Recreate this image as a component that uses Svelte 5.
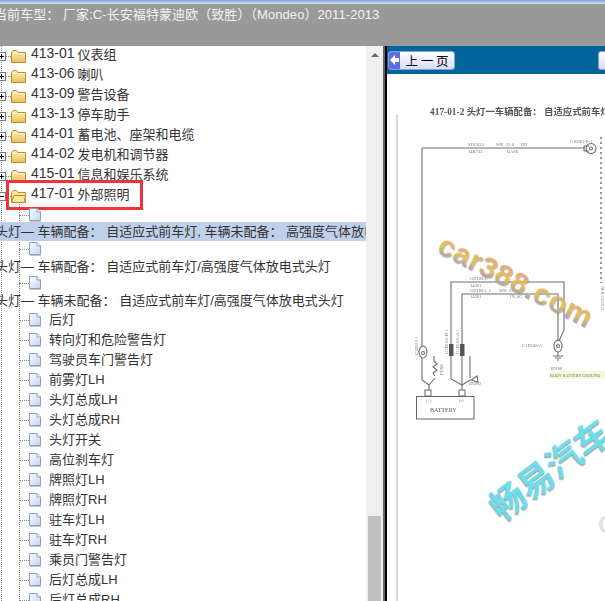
<script lang="ts">
	type Row = { kind: 'folder' | 'doc' | 'wrapped'; label: string; code?: string; open?: boolean; selected?: boolean; last?: boolean };

	const rows: Row[] = [
		{ kind: 'folder', code: '413-01', label: '仪表组' },
		{ kind: 'folder', code: '413-06', label: '喇叭' },
		{ kind: 'folder', code: '413-09', label: '警告设备' },
		{ kind: 'folder', code: '413-13', label: '停车助手' },
		{ kind: 'folder', code: '414-01', label: '蓄电池、座架和电缆' },
		{ kind: 'folder', code: '414-02', label: '发电机和调节器' },
		{ kind: 'folder', code: '415-01', label: '信息和娱乐系统' },
		{ kind: 'folder', code: '417-01', label: '外部照明', open: true },
		{ kind: 'wrapped', label: '头灯— 车辆配备： 自适应式前车灯, 车辆未配备： 高强度气体放电式头灯', selected: true },
		{ kind: 'wrapped', label: '头灯— 车辆配备： 自适应式前车灯/高强度气体放电式头灯' },
		{ kind: 'wrapped', label: '头灯— 车辆未配备： 自适应式前车灯/高强度气体放电式头灯', last: true },
		{ kind: 'doc', label: '后灯' },
		{ kind: 'doc', label: '转向灯和危险警告灯' },
		{ kind: 'doc', label: '驾驶员车门警告灯' },
		{ kind: 'doc', label: '前雾灯LH' },
		{ kind: 'doc', label: '头灯总成LH' },
		{ kind: 'doc', label: '头灯总成RH' },
		{ kind: 'doc', label: '头灯开关' },
		{ kind: 'doc', label: '高位刹车灯' },
		{ kind: 'doc', label: '牌照灯LH' },
		{ kind: 'doc', label: '牌照灯RH' },
		{ kind: 'doc', label: '驻车灯LH' },
		{ kind: 'doc', label: '驻车灯RH' },
		{ kind: 'doc', label: '乘员门警告灯' },
		{ kind: 'doc', label: '后灯总成LH' },
		{ kind: 'doc', label: '后灯总成RH' }
	];
</script>

{#snippet docIcon()}
	<svg class="doc-icon" width="12" height="14" viewBox="0 0 12 14">
		<path d="M.5.5H8L11.5 4V12.5H.5Z" fill="url(#pg)" stroke="#8d9fc4" />
		<path d="M8 .5V4H11.5" fill="#fff" stroke="#8d9fc4" />
		<path d="M1 13.5H12" stroke="#c4c4c4" />
	</svg>
{/snippet}

<svg class="defs" width="0" height="0">
	<defs>
		<linearGradient id="pg" x1="0" y1="0" x2="1" y2="1">
			<stop offset="0" stop-color="#ffffff" />
			<stop offset="1" stop-color="#c0d2f2" />
		</linearGradient>
		<linearGradient id="fg" x1="0" y1="0" x2="0" y2="1">
			<stop offset="0" stop-color="#fdf3b8" />
			<stop offset="1" stop-color="#eebc55" />
		</linearGradient>
	</defs>
</svg>

<div class="screen">
	<div class="chrome"></div>
	<header class="info">
		<span class="info-text">当前车型： 厂家:C-长安福特蒙迪欧（致胜）（Mondeo）2011-2013</span>
	</header>

	<div class="main">
		<aside class="tree">
			<div class="list">
				<div class="spine"></div>
				<div class="spine inner"></div>
				<div class="rows">
					{#each rows as row}
						{#if row.kind === 'folder'}
							<div class="row folder" class:boxed={row.open}>
								<span class="expander" class:plus={!row.open}></span>
								<span class="dots"></span>
								<svg class="folder-icon" width="15" height="13" viewBox="0 0 15 13">
									<path d="M.5 2.5V12.5H14.5V2.5H7L5.5.5H2Z" fill="url(#fg)" stroke="#b98f2e" />
									{#if row.open}
										<path d="M.5 12.5 3 5.5H14.5L13 12.5Z" fill="#fbe994" stroke="#b98f2e" />
									{:else}
										<path d="M1.5 3.5H13.5" stroke="#fff8d0" />
									{/if}
								</svg>
								<span class="code">{row.code}</span>
								<span class="name">{row.label}</span>
							</div>
						{:else if row.kind === 'wrapped'}
							<div class="wrapped" class:last={row.last}>
								<div class="icon-line">
									<span class="dots long"></span>
									{@render docIcon()}
								</div>
								<div class="wrapped-text" class:selected={row.selected}>
									<span>{row.label}</span>
								</div>
							</div>
						{:else}
							<div class="row doc">
								<span class="dots long"></span>
								{@render docIcon()}
								<span class="label">{row.label}</span>
							</div>
						{/if}
					{/each}
				</div>
			</div>
			<div class="scrollbar">
				<span class="arrow"></span>
				<span class="thumb"></span>
			</div>
		</aside>

		<section class="viewer">
			<div class="toolbar">
				<button class="nav">
					<span class="nav-arrow"><svg width="10" height="10" viewBox="0 0 10 10"><path d="M0 5 5 0V3H9V7H5V10Z" fill="#fff" /></svg></span>
					<span class="nav-label">上 一 页</span>
				</button>
				<button class="nav next"></button>
			</div>
			<div class="page">
				<div class="rule"></div>
				<div class="title">417-01-2 头灯一车辆配备： 自适应式前车灯, 车辆未配备： 高强度气体放电式头灯</div>
				<svg class="diagram" width="218" height="486" viewBox="387 115 218 486">
					<g fill="none" stroke="#6f6f6f" stroke-width="1.1">
						<path d="M422 148V346" />
						<path d="M422 148H585" />
						<circle cx="591" cy="148.500" r="5" />
						<circle cx="591" cy="148.500" r="1.500" />
						<path d="M584 146H589M584 151H589M584 146V151" />
						<path d="M601 137V283" stroke-dasharray="2 3" stroke-width="2" stroke="#999" />
						<path d="M451 346V282H564V330L559 341" />
						<path d="M462 346V294H558V341" />
						<ellipse cx="423" cy="352" rx="4" ry="6" />
						<circle cx="423" cy="353" r="1.500" />
						<path d="M422 358V380L429 385" />
						<path d="M434 356v5l3 3-4 3 4 3-4 3 2 3" />
						<path d="M435 378L429 385" />
						<path d="M451 356V379L462 385L470 380" />
						<path d="M462 356V385M470 356V378" />
						<path d="M429 385V390M462 385V390" />
						<path d="M477 376L471 380L478 382Z" />
						<ellipse cx="558" cy="346" rx="4" ry="6" />
						<circle cx="558" cy="346" r="1.500" />
						<path d="M558 352V356M553 356H563M555 358H561M557 360H559" />
					</g>
					<rect x="449" y="344" width="4.500" height="12" fill="#555" />
					<rect x="460" y="344" width="4.500" height="12" fill="#555" />
					<g fill="#fff" stroke="#666">
						<rect x="425" y="390" width="6" height="6" />
						<rect x="459" y="390" width="6" height="6" />
						<rect x="416.500" y="396.500" width="57.500" height="22.500" />
					</g>
					<g class="small" fill="#777">
						<text x="468" y="146">SDC02A</text>
						<text x="496" y="146">WK</text>
						<text x="506" y="146">25.0</text>
						<text x="521" y="146">RD</text>
						<text x="468" y="153">14K733</text>
						<text x="507" y="153">BASE</text>
						<text x="570" y="143">C10001-B-1</text>
						<text x="470" y="280">GD108A</text>
						<text x="470" y="287">14301</text>
						<text x="470" y="292">GD108A_1</text>
						<text x="499" y="292">WK</text>
						<text x="509" y="292">22.0</text>
						<text x="470" y="298">14301</text>
						<text x="510" y="298">IN_0G</text>
						<text x="522" y="347">G1D108-A</text>
						<text x="550" y="370">1D108</text>
						<text x="468" y="385">1D0N2</text>
						<text x="426" y="402">(+)</text>
						<text x="459" y="402">(-)</text>
						<text x="418" y="355" transform="rotate(-90 418 355)">C1D010-1</text>
						<text x="448" y="354" transform="rotate(-90 448 354)">G1D10A-B-1</text>
						<text x="459" y="354" transform="rotate(-90 459 354)">G1D10A-A-1</text>
						<text x="443" y="375" transform="rotate(-90 443 375)">FUSE</text>
						<text x="604" y="310" transform="rotate(-90 604 310)">C10001-S-B1</text>
					</g>
					<rect x="550" y="371" width="55" height="8" fill="#f7f7dc" />
					<text x="550" y="377" class="small ground" fill="#777">BODY BATTERY GROUND</text>
					<text x="430" y="412" class="battery" fill="#666">BATTERY</text>
				</svg>
				<span class="mark mark-car">car388.com</span>
				<span class="mark mark-cn">畅易汽车</span>
				<span class="mark-c">C</span>
			</div>
		</section>
	</div>
</div>

<style>
	:global(body) {
		margin: 0;
		background: #fff;
		overflow: hidden;
	}

	.defs {
		position: absolute;
	}

	.screen {
		width: 605px;
		height: 601px;
		display: flex;
		flex-direction: column;
		overflow: hidden;
		font-family: 'Liberation Sans', 'Noto Sans CJK SC', sans-serif;
	}

	.chrome {
		height: 4px;
		background: linear-gradient(#7f9fd8, #d8e0f4);
	}

	.info {
		height: 42px;
		box-sizing: border-box;
		background: #999;
		color: #f4f4f4;
		font-size: 13px;
		line-height: 20px;
		padding-top: 1px;
		white-space: nowrap;
		overflow: hidden;
	}

	.info-text {
		display: block;
		margin-left: -6px;
		letter-spacing: 0.07px;
	}

	.main {
		flex: 1;
		display: flex;
		min-height: 0;
	}

	.tree {
		width: 385px;
		display: flex;
		flex: none;
		overflow: hidden;
	}

	.list {
		width: 366px;
		flex: none;
		position: relative;
		overflow: hidden;
		font-size: 13px;
		color: #333;
	}

	.rows {
		margin-top: -3px;
	}

	.spine {
		position: absolute;
		left: 1px;
		top: 0;
		bottom: 0;
		border-left: 1px dotted #888;
	}

	.spine.inner {
		left: 19px;
		top: 158px;
	}

	.row {
		height: 20px;
		display: flex;
		align-items: center;
		white-space: nowrap;
		position: relative;
	}

	.row.doc {
		padding-left: 19px;
	}

	.doc .dots,
	.doc .doc-icon {
		margin-top: 4px;
	}

	.doc .label {
		margin-left: 8px;
	}

	.folder .expander,
	.folder .dots,
	.folder .folder-icon {
		margin-top: 6px;
	}

	.folder-icon {
		flex: none;
	}

	.code {
		margin-left: 5px;
		font-size: 14px;
	}

	.name {
		margin-left: 3px;
	}

	.boxed::after {
		content: '';
		position: absolute;
		left: 6px;
		top: -3px;
		width: 137px;
		height: 30px;
		box-sizing: border-box;
		border: 3px solid #f0343a;
	}

	.expander {
		position: relative;
		width: 7px;
		height: 9px;
		margin-left: -1px;
		box-sizing: border-box;
		border: 1px solid #777;
		border-left: none;
		background: linear-gradient(#000, #000) 0 3px / 5px 1px no-repeat #fff;
		flex: none;
	}

	.expander.plus::after {
		content: '';
		position: absolute;
		left: 2px;
		top: 1px;
		width: 1px;
		height: 5px;
		background: #000;
	}

	.dots {
		width: 5px;
		border-top: 1px dotted #888;
		flex: none;
	}

	.dots.long {
		width: 10px;
	}

	.wrapped {
		height: 34px;
		position: relative;
	}

	.wrapped.last {
		height: 37px;
	}

	.icon-line {
		height: 24px;
		padding-left: 19px;
		display: flex;
		align-items: center;
	}

	.doc-icon {
		flex: none;
	}

	.wrapped-text {
		position: relative;
		height: 20px;
		line-height: 20px;
		margin-top: -4px;
		white-space: nowrap;
		overflow: hidden;
	}

	.wrapped-text span {
		display: block;
		margin-left: -5px;
	}

	.wrapped-text.selected {
		height: 19px;
		margin-top: -5px;
		background: #c0d0ea;
	}

	.scrollbar {
		width: 17px;
		background: #f0f0f0;
		border-right: 2px solid #666;
		position: relative;
		flex: none;
	}

	.arrow {
		position: absolute;
		left: 5px;
		top: 7px;
		border: 4px solid transparent;
		border-top: none;
		border-bottom: 4px solid #666;
	}

	.thumb {
		position: absolute;
		left: 2px;
		right: 2px;
		top: 470px;
		bottom: 0;
		background: #c0c0c0;
	}

	.viewer {
		flex: 1;
		min-width: 0;
		display: flex;
		flex-direction: column;
		border-left: 2px solid #000;
		background: #fff;
	}

	.toolbar {
		height: 28px;
		flex: none;
		background: #006699;
		display: flex;
		align-items: center;
		justify-content: space-between;
		padding: 0 0 0 1px;
		box-sizing: border-box;
	}

	.nav {
		width: 67px;
		height: 19px;
		padding: 0;
		display: flex;
		align-items: stretch;
		border: 1px solid #8f9ce0;
		border-radius: 3px;
		background: linear-gradient(#fff, #d6dcf6);
		font: 12.5px 'Noto Sans CJK SC', sans-serif;
		color: #000;
		overflow: hidden;
	}

	.nav.next {
		width: 7px;
		border-right: none;
		border-radius: 3px 0 0 3px;
	}

	.nav-arrow {
		width: 11px;
		background: #5a6fe0;
		display: flex;
		align-items: center;
		justify-content: center;
	}

	.nav-label {
		flex: 1;
		line-height: 17px;
		white-space: nowrap;
	}

	.page {
		flex: 1;
		position: relative;
		overflow: hidden;
		padding: 32px 0 0 43px;
	}

	.rule {
		position: absolute;
		left: 9px;
		top: 41px;
		bottom: 0;
		width: 2px;
		background: #d8d8d8;
	}

	.title {
		font: bold 9.4px 'Liberation Serif', 'Noto Sans CJK SC', serif;
		color: #555;
		white-space: nowrap;
		line-height: 12px;
		filter: blur(0.3px);
	}

	.diagram {
		position: absolute;
		left: 0;
		top: 41px;
		filter: blur(0.3px);
	}

	.small {
		font: 4.5px 'Liberation Serif', serif;
	}

	.ground {
		font-size: 4.2px;
	}

	.battery {
		font: 6px 'Liberation Serif', serif;
	}

	.mark {
		position: absolute;
		white-space: nowrap;
		font-weight: bold;
		transform-origin: center;
	}

	.mark-car {
		left: 44px;
		top: 190px;
		line-height: 34px;
		font-size: 30px;
		letter-spacing: 0.4px;
		transform: rotate(26.7deg);
		background: linear-gradient(180deg, #e6a47c 20%, #e5c44e 55%, #a597bd 85%);
		-webkit-background-clip: text;
		background-clip: text;
		color: transparent;
		filter: drop-shadow(1px 1px 0 rgba(130, 120, 160, 0.55)) blur(0.4px);
	}

	.mark-cn {
		left: 92px;
		top: 374px;
		line-height: 40px;
		font-size: 35px;
		font-family: 'Noto Sans CJK SC', sans-serif;
		color: #6fdcea;
		text-shadow: -1px 1px 1px #9a9a9a;
		transform: rotate(-37deg);
		filter: blur(0.4px);
	}

	.mark-c {
		position: absolute;
		left: 211px;
		top: 437px;
		font: bold 24px 'Liberation Sans', sans-serif;
		color: #e2e2e2;
	}
</style>
